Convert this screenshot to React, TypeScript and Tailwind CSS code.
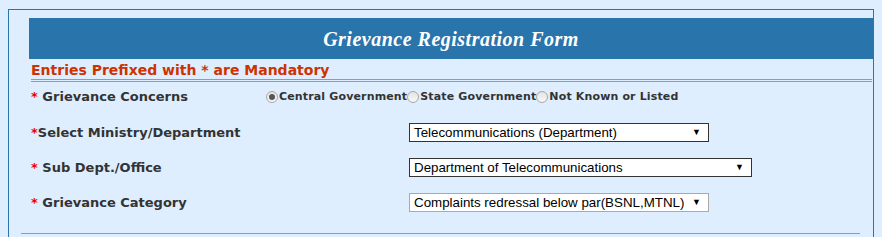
const verdana = { fontFamily: '"DejaVu Sans", Verdana, sans-serif' };

function Label({ text, spaced = true }: { text: string; spaced?: boolean }) {
    return (
        <div className="w-[235px] shrink-0 text-[13px] font-bold text-[#333333]">
            <span className="text-[#ee0000]">*</span>
            {spaced ? ' ' : ''}
            {text}
        </div>
    );
}

function Radio({ checked, label }: { checked?: boolean; label: string }) {
    return (
        <span className="flex items-center">
            <span className="w-[12px] h-[12px] rounded-full border border-[#a8a8a8] bg-gradient-to-b from-[#e4e4e4] to-[#f8f8f8] flex items-center justify-center">
                {checked && <span className="w-[6px] h-[6px] rounded-full bg-[#555555]" />}
            </span>
            <span className="text-[11px] font-bold text-[#333333] ml-px tracking-[0.15px]">{label}</span>
        </span>
    );
}

function FakeSelect({ value, width, light }: { value: string; width: string; light?: boolean }) {
    return (
        <div
            className={`${width} h-[19px] bg-white border ${light ? 'border-[#a9a9a9]' : 'border-[#333333]'} flex items-center justify-between pl-[4px] pr-[7px] text-[13.33px] text-black`}
            style={{ fontFamily: '"Liberation Sans", Arial, sans-serif' }}
        >
            <span>{value}</span>
            <span className="text-[9px] leading-none">▼</span>
        </div>
    );
}

export default function App() {
    return (
        <div className="w-[882px] h-[237px] overflow-hidden bg-[#dfeefe] pt-[9px] pl-[8px]" style={verdana}>
            <div className="w-[866px] h-[240px] border border-[#2a75ad] pt-[8px] pl-[20px]">
                <div className="h-[41px] bg-[#2874ab] flex items-center justify-center">
                    <span
                        className="text-white text-[20px] font-bold italic tracking-[0.5px] pt-[1px]"
                        style={{ fontFamily: '"Liberation Serif", "Times New Roman", serif' }}
                    >
                        Grievance Registration Form
                    </span>
                </div>

                <div className="pl-[2px] pr-[1px]">
                    <div className="h-[20px] pt-[2px] text-[14px] leading-[18px] font-bold text-[#cc3300]">
                        Entries Prefixed with * are Mandatory
                    </div>
                    <div className="h-[3px] border-y border-[#9a9a9a]" />

                    <div className="h-[30px] flex items-center">
                        <Label text="Grievance Concerns" />
                        <div className="flex items-center">
                            <Radio checked label="Central Government" />
                            <Radio label="State Government" />
                            <Radio label="Not Known or Listed" />
                        </div>
                    </div>

                    <div className="mt-[3px] h-[35px] flex items-center">
                        <div className="w-[378px] shrink-0 text-[13px] font-bold text-[#333333]">
                            <span className="text-[#ee0000]">*</span>Select Ministry/Department
                        </div>
                        <FakeSelect value="Telecommunications (Department)" width="w-[300px]" />
                    </div>

                    <div className="h-[35px] flex items-center">
                        <div className="w-[378px] shrink-0 text-[13px] font-bold text-[#333333]">
                            <span className="text-[#ee0000]">*</span> Sub Dept./Office
                        </div>
                        <FakeSelect value="Department of Telecommunications" width="w-[343px]" />
                    </div>

                    <div className="h-[35px] flex items-center">
                        <div className="w-[378px] shrink-0 text-[13px] font-bold text-[#333333]">
                            <span className="text-[#ee0000]">*</span> Grievance Category
                        </div>
                        <FakeSelect value="Complaints redressal below par(BSNL,MTNL)" width="w-[300px]" light />
                    </div>
                </div>

                <div className="mt-[13px] -ml-[8px] w-[839px] border-t border-[#9a9a9a]" />
            </div>
        </div>
    );
}
